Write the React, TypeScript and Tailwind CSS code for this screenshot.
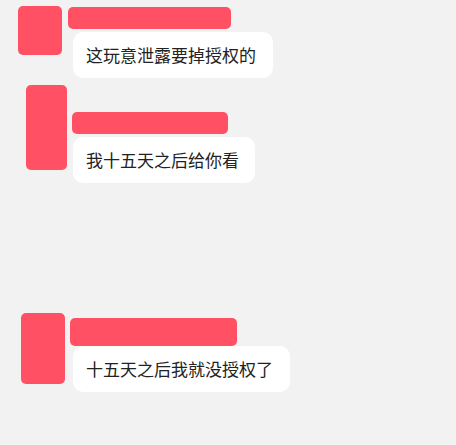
export default function App() {
  return (
    <div
      className="w-full h-[445px] bg-[#f2f2f2] overflow-hidden"
      style={{ fontFamily: '"Noto Sans CJK SC", "Noto Sans", sans-serif' }}
    >
      {/* message 1 */}
      <div className="flex pt-[6px]">
        <div className="ml-[18px] w-[44px] h-[49px] rounded-[5px] bg-[#ff5064]" />
        <div className="ml-[6px] flex flex-col">
          <div className="mt-[1px] w-[163px] h-[22px] rounded-[5px] bg-[#ff5064]" />
          <div className="ml-[5px] mt-[3px] w-[200px] h-[46px] rounded-[10px] bg-white flex items-center px-[13px] text-[17px] text-[#222]">
            这玩意泄露要掉授权的
          </div>
        </div>
      </div>

      {/* message 2 */}
      <div className="flex mt-[7px]">
        <div className="ml-[26px] w-[41px] h-[85px] rounded-[5px] bg-[#ff5064]" />
        <div className="ml-[5px] flex flex-col">
          <div className="mt-[27px] w-[156px] h-[22px] rounded-[5px] bg-[#ff5064]" />
          <div className="ml-[1px] mt-[3px] w-[182px] h-[46px] rounded-[10px] bg-white flex items-center px-[13px] text-[17px] text-[#222]">
            我十五天之后给你看
          </div>
        </div>
      </div>

      {/* message 3 */}
      <div className="flex mt-[130px]">
        <div className="ml-[21px] w-[44px] h-[71px] rounded-[5px] bg-[#ff5064]" />
        <div className="ml-[5px] flex flex-col">
          <div className="mt-[5px] w-[167px] h-[28px] rounded-[5px] bg-[#ff5064]" />
          <div className="ml-[3px] w-[217px] h-[46px] rounded-[10px] bg-white flex items-center px-[13px] text-[17px] text-[#222]">
            十五天之后我就没授权了
          </div>
        </div>
      </div>
    </div>
  );
}
